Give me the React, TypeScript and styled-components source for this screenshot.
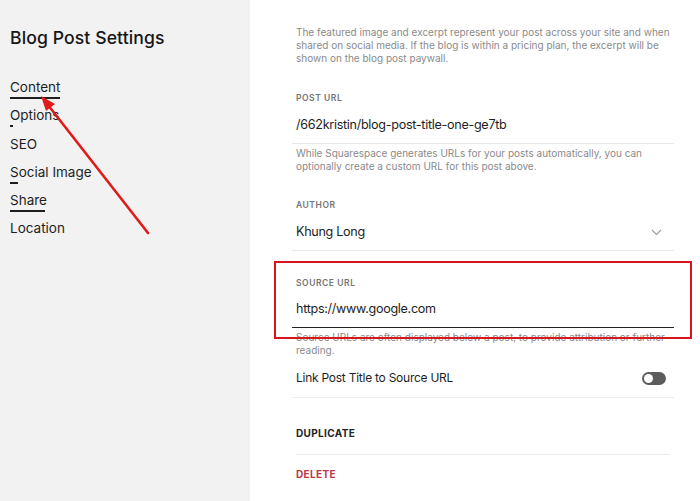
import styled, { createGlobalStyle } from 'styled-components';

const GlobalStyle = createGlobalStyle`
  html, body { margin: 0; padding: 0; }
  body {
    font-family: Inter, "Liberation Sans", Arial, sans-serif;
    -webkit-font-smoothing: antialiased;
  }
`;

/* ================================================================
   Data
   ================================================================ */

const NAV_ITEMS: { label: string; bar: number }[] = [
  { label: 'Content', bar: 50 },
  { label: 'Options', bar: 3 },
  { label: 'SEO', bar: 0 },
  { label: 'Social Image', bar: 8 },
  { label: 'Share', bar: 35 },
  { label: 'Location', bar: 0 },
];

/* ================================================================
   Styles
   ================================================================ */

const Page = styled.div`
  position: relative;
  display: flex;
  width: 700px;
  height: 501px;
  overflow: hidden;
  background: #fff;
`;

const Sidebar = styled.aside`
  width: 250px;
  flex-shrink: 0;
  background: #f2f2f2;
  padding: 27px 0 0 10px;
  box-sizing: border-box;
`;

const Title = styled.h1`
  margin: 0;
  font-size: 17.6px;
  line-height: 22px;
  font-weight: 500;
  color: #161616;
  letter-spacing: 0.1px;
`;

const Nav = styled.nav`
  display: flex;
  flex-direction: column;
  margin-top: 29px;
`;

const NavItem = styled.div`
  display: flex;
  flex-direction: column;
  align-items: flex-start;
  height: 28.3px;
  font-size: 13.5px;
  line-height: 18px;
  color: #1e1e1e;
`;

const NavBar = styled.span<{ $w: number }>`
  display: block;
  width: ${({ $w }) => $w}px;
  height: 2px;
  margin-top: 1px;
  background: #1e1e1e;
`;

const Main = styled.main`
  flex: 1;
  min-width: 0;
  display: flex;
  flex-direction: column;
  padding: 26px 26px 0 42px;
`;

const Help = styled.p<{ $top?: number }>`
  margin: ${({ $top }) => $top ?? 0}px 0 0;
  padding: 0 4px;
  font-size: 10px;
  line-height: 13px;
  color: #8a8a8a;
  white-space: nowrap;
`;

const Field = styled.div<{ $top: number; $active?: boolean }>`
  margin-top: ${({ $top }) => $top}px;
  padding: 0 4px 8px;
  border-bottom: 1px solid ${({ $active }) => ($active ? '#222' : '#e8e8e8')};
`;

const Label = styled.div`
  font-size: 8.5px;
  line-height: 12px;
  font-weight: 600;
  letter-spacing: 0.55px;
  color: #757575;
  text-transform: uppercase;
`;

const Value = styled.div<{ $gap?: number }>`
  display: flex;
  align-items: center;
  justify-content: space-between;
  margin-top: ${({ $gap }) => $gap ?? 11}px;
  font-size: 12.6px;
  line-height: 20px;
  letter-spacing: -0.3px;
  color: #1e1e1e;
`;

const Chevron = styled.svg`
  margin-right: 8px;
`;

const ToggleRow = styled.div`
  display: flex;
  align-items: center;
  justify-content: space-between;
  margin-top: 12px;
  padding: 0 4px 10px;
  border-bottom: 1px solid #ececec;
  font-size: 12px;
  line-height: 18px;
  letter-spacing: -0.25px;
  color: #1e1e1e;
`;

const Toggle = styled.span`
  position: relative;
  width: 24px;
  height: 13px;
  margin-right: 4px;
  border-radius: 7px;
  background: #5c5c5c;

  &::after {
    content: '';
    position: absolute;
    left: 2px;
    top: 2px;
    width: 9px;
    height: 9px;
    border-radius: 50%;
    background: #fff;
  }
`;

const Action = styled.div<{ $danger?: boolean; $top: number; $line?: boolean }>`
  margin: ${({ $top }) => $top}px 4px 0;
  padding-bottom: ${({ $line }) => ($line ? 14 : 0)}px;
  border-bottom: ${({ $line }) => ($line ? '1px solid #ececec' : 'none')};
  font-size: 10px;
  line-height: 14px;
  font-weight: 700;
  letter-spacing: 0.35px;
  color: ${({ $danger }) => ($danger ? '#b83a4a' : '#222')};
`;

/* annotation overlays */

const Highlight = styled.div`
  position: absolute;
  left: 274px;
  top: 261px;
  width: 418px;
  height: 78px;
  border: 2.5px solid #d9161c;
  box-sizing: border-box;
  pointer-events: none;
`;

const Arrow = styled.svg`
  position: absolute;
  left: 0;
  top: 0;
  pointer-events: none;
`;

/* ================================================================
   Component
   ================================================================ */

export default function App() {
  return (
    <>
      <GlobalStyle />
      <Page>
        <Sidebar>
          <Title>Blog Post Settings</Title>
          <Nav>
            {NAV_ITEMS.map((item) => (
              <NavItem key={item.label}>
                {item.label}
                <NavBar $w={item.bar} />
              </NavItem>
            ))}
          </Nav>
        </Sidebar>

        <Main>
          <Help>
            The featured image and excerpt represent your post across your site and when
            <br />
            shared on social media. If the blog is within a pricing plan, the excerpt will be
            <br />
            shown on the blog post paywall.
          </Help>

          <Field $top={27}>
            <Label>Post URL</Label>
            <Value>/662kristin/blog-post-title-one-ge7tb</Value>
          </Field>
          <Help $top={3}>
            While Squarespace generates URLs for your posts automatically, you can
            <br />
            optionally create a custom URL for this post above.
          </Help>

          <Field $top={26}>
            <Label>Author</Label>
            <Value>
              Khung Long
              <Chevron width="11" height="7" viewBox="0 0 11 7" fill="none" stroke="#9a9a9a" strokeWidth="1.1">
                <polyline points="1 1 5.5 5.5 10 1" />
              </Chevron>
            </Value>
          </Field>

          <Field $top={26} $active>
            <Label>Source URL</Label>
            <Value $gap={10}>https://www.google.com</Value>
          </Field>
          <Help $top={3}>
            Source URLs are often displayed below a post, to provide attribution or further
            <br />
            reading.
          </Help>

          <ToggleRow>
            Link Post Title to Source URL
            <Toggle />
          </ToggleRow>

          <Action $top={28} $line>DUPLICATE</Action>
          <Action $top={12} $danger>DELETE</Action>
        </Main>

        <Highlight />
        <Arrow width="700" height="501" viewBox="0 0 700 501">
          <line x1="148" y1="233" x2="48" y2="105" stroke="#e01b1b" strokeWidth="2.6" strokeLinecap="round" />
          <polygon points="41,96 55,104 46,111" fill="#e01b1b" />
        </Arrow>
      </Page>
    </>
  );
}
